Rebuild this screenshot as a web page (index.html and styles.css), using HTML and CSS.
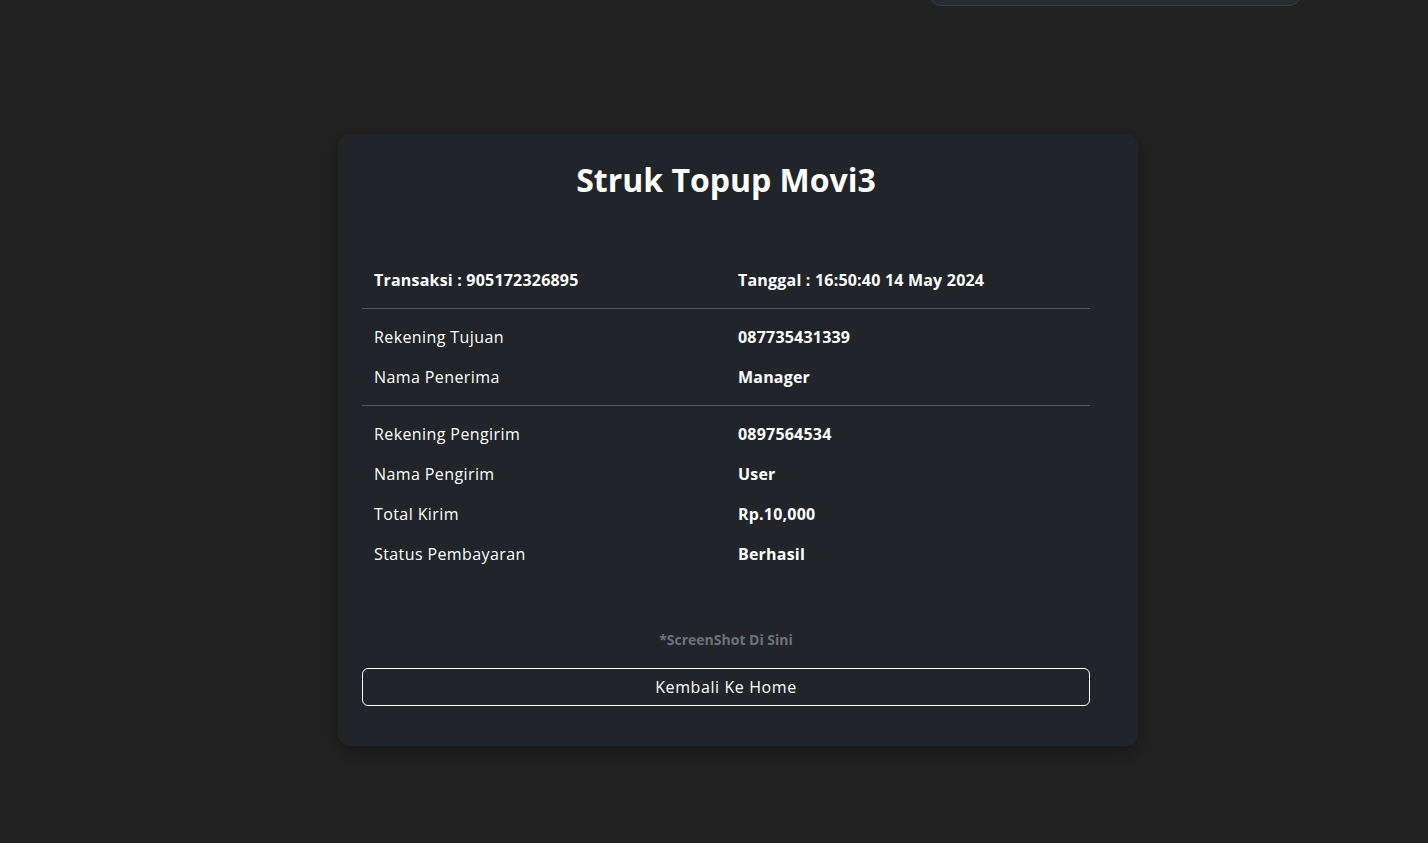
FILE: index.html
```html
<!DOCTYPE html>
<html lang="id">
<head>
<meta charset="utf-8">
<title>Struk Topup Movi3</title>
<link rel="stylesheet" href="styles.css">
</head>
<body>
<div class="top-pop"></div>
<main class="page">
  <section class="card">
    <h2 class="title">Struk Topup Movi3</h2>
    <div class="receipt">
      <div class="row head">
        <div class="cell">Transaksi : 905172326895</div>
        <div class="cell">Tanggal : 16:50:40 14 May 2024</div>
      </div>
      <hr class="sep">
      <div class="row"><div class="cell label">Rekening Tujuan</div><div class="cell val">087735431339</div></div>
      <div class="row"><div class="cell label">Nama Penerima</div><div class="cell val">Manager</div></div>
      <hr class="sep">
      <div class="row"><div class="cell label">Rekening Pengirim</div><div class="cell val">0897564534</div></div>
      <div class="row"><div class="cell label">Nama Pengirim</div><div class="cell val">User</div></div>
      <div class="row"><div class="cell label">Total Kirim</div><div class="cell val">Rp.10,000</div></div>
      <div class="row"><div class="cell label">Status Pembayaran</div><div class="cell val">Berhasil</div></div>
    </div>
    <p class="note">*ScreenShot Di Sini</p>
    <button class="btn-home" type="button">Kembali Ke Home</button>
  </section>
</main>
</body>
</html>
```
FILE: styles.css
```css
* { box-sizing: border-box; }
html, body { margin: 0; padding: 0; }
body {
  background: #222222;
  color: #ffffff;
  font-family: "Open Sans", "Noto Sans", sans-serif;
  font-size: 16px;
  letter-spacing: 0.4px;
  min-height: 843px;
  position: relative;
  overflow: hidden;
}
.top-pop {
  position: absolute;
  left: 929px;
  top: -40px;
  width: 372px;
  height: 46px;
  background: #2a2b30;
  border: 1px solid #3c3d42;
  border-radius: 12px;
}
.page {
  display: flex;
  justify-content: center;
  padding-top: 134px;
  padding-left: 48px;
}
.card {
  width: 800px;
  background: #212429;
  border-radius: 12px;
  padding: 24px 48px 40px 24px;
  box-shadow: 0 6px 20px rgba(0,0,0,0.35);
}
.title {
  margin: 3px 0 61px;
  text-align: center;
  font-size: 32px;
  font-weight: 700;
  line-height: 38px;
  letter-spacing: 0;
}
.receipt { display: flex; flex-direction: column; }
.row {
  display: grid;
  grid-template-columns: 1fr 1fr;
  height: 40px;
  align-items: center;
}
.cell { padding: 0 12px; line-height: 24px; }
.head .cell { font-weight: 700; letter-spacing: 0.2px; }
.val { font-weight: 700; letter-spacing: 0.2px; }
.sep {
  border: 0;
  border-top: 1px solid #55575c;
  margin: 8px 0;
}
.note {
  margin: 56px 0 18px;
  text-align: center;
  color: #6c737b;
  font-size: 14px;
  font-weight: 700;
  line-height: 20px;
  letter-spacing: 0;
}
.btn-home {
  display: block;
  width: 100%;
  height: 38px;
  background: transparent;
  color: #ffffff;
  border: 1px solid #ffffff;
  border-radius: 6px;
  font-family: inherit;
  font-size: 16px;
  letter-spacing: 0.6px;
}
```
